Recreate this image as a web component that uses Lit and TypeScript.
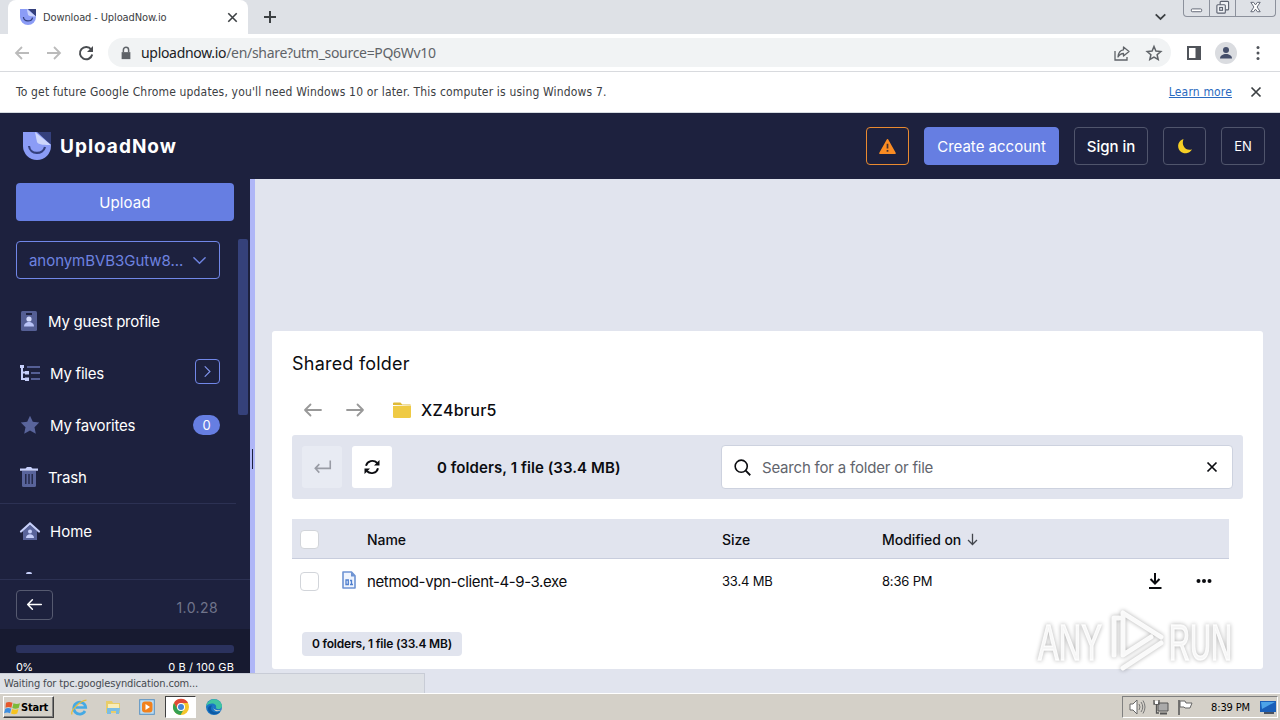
import { LitElement, html, svg, css, nothing } from 'lit';
import { customElement, property } from 'lit/decorators.js';
import { classMap } from 'lit/directives/class-map.js';
import { styleMap } from 'lit/directives/style-map.js';

const icons: Record<string, unknown> = {
  logo: svg`
    <path d="M0 0h28v14a14 14 0 0 1-28 0z" fill="#8b9cf6"/>
    <path d="M14 0h14v13z" fill="#34407c"/>
    <path d="M12 0l2 10c1 3 9 3 14 3z" fill="#cdd6fb"/>
    <path d="M6 14c1 9 14 9 16 1" fill="none" stroke="#34407c" stroke-width="2.2"/>`,
  back: svg`<path d="M15 8H2M8 2L2 8l6 6" fill="none" stroke="currentColor" stroke-width="1.8"/>`,
  forward: svg`<path d="M1 8h13M8 2l6 6-6 6" fill="none" stroke="currentColor" stroke-width="1.8"/>`,
  reload: svg`<path d="M13.2 4.5A6.2 6.2 0 1 0 14.2 9.5" fill="none" stroke="currentColor" stroke-width="2"/><path d="M15 1v6H9z" fill="currentColor"/>`,
  lock: svg`<path d="M3 7h10v8H3z" fill="currentColor"/><path d="M5 7V4.500a3 3 0 0 1 6 0V7" fill="none" stroke="currentColor" stroke-width="1.700"/>`,
  share: svg`<path d="M1 6v9h12v-3" fill="none" stroke="currentColor" stroke-width="1.300"/><path d="M9.500 2l5.500 4.500-5.500 4.500V8.500C7 8.500 5.500 9.500 4 12c.3-4 2-6.800 5.500-7.200z" fill="none" stroke="currentColor" stroke-width="1.300" stroke-linejoin="round"/>`,
  starLine: svg`<path d="M8 1.500l1.900 4.600 4.900.4-3.700 3.200 1.100 4.800L8 12l-4.200 2.500 1.100-4.800L1.200 6.500l4.900-.4z" fill="none" stroke="currentColor" stroke-width="1.500"/>`,
  panel: svg`<path d="M2 2h12v12H2z" fill="none" stroke="currentColor" stroke-width="2"/><path d="M9.500 2H15v12H9.500z" fill="currentColor"/>`,
  avatar: svg`<circle cx="11" cy="11" r="11" fill="#dadce0"/><circle cx="11" cy="8" r="3" fill="#454f6b"/><path d="M5 16.500c0-6 12-6 12 0z" fill="#454f6b"/>`,
  more: svg`<circle cx="8" cy="2.500" r="1.500" fill="currentColor"/><circle cx="8" cy="8" r="1.500" fill="currentColor"/><circle cx="8" cy="13.500" r="1.500" fill="currentColor"/>`,
  cross: svg`<path d="M3.500 3.500l9 9M12.500 3.500l-9 9" fill="none" stroke="currentColor" stroke-width="1.700"/>`,
  plus: svg`<path d="M8 2v12M2 8h12" stroke="currentColor" stroke-width="2"/>`,
  chevron: svg`<path d="M2 5l6 6 6-6" fill="none" stroke="currentColor" stroke-width="1.600" stroke-linecap="round"/>`,
  chevronBold: svg`<path d="M1 5l7 6.500L15 5" fill="none" stroke="currentColor" stroke-width="2.600"/>`,
  chevronRight: svg`<path d="M5 2l6 6-6 6" fill="none" stroke="currentColor" stroke-width="1.400" stroke-linecap="round"/>`,
  minimize: svg`<rect x="2.500" y="9.500" width="11" height="3" rx="1" fill="#fff" stroke="#5c6270"/>`,
  restore: svg`<g fill="#eef0f4" stroke="#5c6270" stroke-width="1.200"><rect x="5.500" y="1.500" width="9" height="9" rx="1"/><rect x="2" y="5" width="9" height="9" rx="1"/><rect x="5" y="8" width="3" height="3"/></g>`,
  close: svg`<path d="M3 2.500h3L8 5.200l2-2.700h3L9.700 7.500l3.300 5h-3L8 9.800l-2 2.700H3l3.300-5z" fill="#fff" stroke="#5c6270"/>`,
  warning: svg`<path d="M8 1.700L15 14.300H1z" fill="#fb8c23" stroke="#fb8c23" stroke-width="1.600" stroke-linejoin="round"/><path d="M8 5.500v4.300M8 11.300v1.700" stroke="#49302e" stroke-width="1.600"/>`,
  moon: svg`<path d="M6.500 1A7.300 7.300 0 1 0 15 11.200C9.500 13.500 3.800 8 6.500 1z" fill="#f6cf25"/>`,
  profile: svg`<rect x="2" width="16" height="20" rx="1.500" fill="#555f95"/><path d="M7 2h6v2H7z" fill="#1d213e"/><circle cx="10" cy="8" r="2.600" fill="#d3dafb"/><path d="M5 15.500c0-6 10-6 10 0z" fill="#b9c3f7"/>`,
  files: svg`<path d="M2 2v13h6M2 8.500h6" fill="none" stroke="#c7d0fb" stroke-width="2"/><path d="M0 1h4v3H0zM5 7h4v3.500H5zM5 13.500h4V17H5z" fill="#c7d0fb"/><path d="M7 3h13M11 9h9M11 15h9" stroke="#555f95" stroke-width="2"/>`,
  star: svg`<path d="M10 .8l2.800 6 6.400.8-4.700 4.600 1.300 6.600L10 15.600l-5.800 3.200 1.300-6.600L.8 7.600l6.400-.8z" fill="#59649b"/>`,
  trash: svg`<path d="M3 4h14v14.500a1.500 1.500 0 0 1-1.500 1.500h-11A1.500 1.500 0 0 1 3 18.500z" fill="#59649b"/><path d="M1 1.500h5.500L8 0h4l1.500 1.500H19v2.300H1z" fill="#c7d0fb"/><path d="M6.800 7v10M10 7v10M13.200 7v10" stroke="#1d213e" stroke-width="1.300"/>`,
  home: svg`<path d="M3 10l7-6 7 6v9H3z" fill="#59649b"/><path d="M1 10.500L10 2.500l9 8" fill="none" stroke="#c7d0fb" stroke-width="2.200" stroke-linecap="round"/><circle cx="10" cy="10.500" r="2" fill="#c7d0fb"/><path d="M6 17c0-5 8-5 8 0z" fill="#c7d0fb"/>`,
  arrowLeft: svg`<path d="M18 10H2M7.500 4.500L2 10l5.500 5.500" fill="none" stroke="currentColor" stroke-width="1.800" stroke-linecap="round" stroke-linejoin="round"/>`,
  arrowRight: svg`<path d="M2 10h16M12.500 4.500L18 10l-5.500 5.500" fill="none" stroke="currentColor" stroke-width="1.800" stroke-linecap="round" stroke-linejoin="round"/>`,
  arrowDown: svg`<path d="M8 1v13M2.500 8.700L8 14.200l5.500-5.500" fill="none" stroke="currentColor" stroke-width="1.600"/>`,
  folder: svg`<path d="M0 4V2.500A1 1 0 0 1 1 1.500h6.500l1.700 2H17a1 1 0 0 1 1 1z" fill="#dfba38"/><path d="M0 5h18v10.500a1.500 1.500 0 0 1-1.500 1.500h-15A1.500 1.500 0 0 1 0 15.500z" fill="#efca44"/>`,
  enter: svg`<path d="M15.300 1.500v7.300H1.500M5 4.800L1.200 8.800 5 12.800" fill="none" stroke="currentColor" stroke-width="1.500"/>`,
  sync: svg`<path d="M2 6.800C3.200 1.800 9.500.3 13.300 4M14 9.200C12.800 14.200 6.500 15.700 2.700 12" fill="none" stroke="currentColor" stroke-width="1.900"/><path d="M15.500 1v5.500H10zM.5 15V9.500H6z" fill="currentColor"/>`,
  search: svg`<circle cx="6.800" cy="6.800" r="5.700" fill="none" stroke="currentColor" stroke-width="1.500"/><path d="M10.800 10.800l4.500 4.500" stroke="currentColor" stroke-width="1.700"/>`,
  exe: svg`<path d="M1 1h8.500L13 4.700V17H1z" fill="#eff4fd" stroke="#6d93d3" stroke-width="1.600" stroke-linejoin="round"/><path d="M9 1v4.500h4z" fill="#6d93d3"/><path d="M4 9h2.300v4.500H4zM8 9.500h1.500v4M8 13.500h3" fill="none" stroke="#4f7fce" stroke-width="1.300"/>`,
  download: svg`<path d="M8 0v10.500M3.500 6L8 10.500 12.500 6" fill="none" stroke="currentColor" stroke-width="2"/><path d="M2 15h12.500" stroke="currentColor" stroke-width="2"/>`,
  dots: svg`<circle cx="2.500" cy="8" r="2" fill="currentColor"/><circle cx="8" cy="8" r="2" fill="currentColor"/><circle cx="13.500" cy="8" r="2" fill="currentColor"/>`,
  windows: svg`<path d="M1 3q3-2 7 0L6.800 8.200q-3-1.600-6.300 0z" fill="#e6582b"/><path d="M9 3.400q3.500 1.700 7 0L14.600 8.500q-3.500 1.500-6.800 0z" fill="#7cba38"/><path d="M.3 9.200q3-1.600 6.300 0L5.400 14q-3-1.600-6.400 0z" fill="#3d8ee0"/><path d="M7.600 9.500q3.200 1.700 6.800 0L13 14.500q-3.200 1.500-6.600 0z" fill="#f6c31f"/>`,
  ie: svg`<path d="M14 12a6 6 0 1 1 .7-3.500H4.500" fill="none" stroke="#45a9e4" stroke-width="2.700"/><path d="M1 15.500C-1 12 9 1.500 15.500 1.200" fill="none" stroke="#e7bd3a" stroke-width="1.300"/>`,
  explorer: svg`<path d="M1 2h6l1 2h7v10H1z" fill="#e9cd69"/><path d="M3 5h11v5H3z" fill="#f9edb8"/><path d="M2 9h13l-1 6h-3v-3H6v3H2z" fill="#7bbde4"/>`,
  media: svg`<rect x=".7" y=".7" width="14.600" height="14.600" fill="#bcdcf3" stroke="#5791c3"/><rect x="3" y="2.500" width="10.500" height="11" rx="3" fill="#f1811d"/><path d="M6.500 5l4.500 3-4.500 3z" fill="#fff"/>`,
  chrome: svg`<circle cx="8" cy="8" r="8" fill="#f5c62c"/><path d="M1 4a8 8 0 0 1 14 0H8L4.500 10z" fill="#e04a38"/><path d="M1 4a8 8 0 0 0 6.500 12l3.500-6H4.500z" fill="#35a052"/><circle cx="8" cy="8" r="4" fill="#fff"/><circle cx="8" cy="8" r="3" fill="#4285d8"/>`,
  edge: svg`<circle cx="8" cy="8" r="8" fill="#1976c5"/><path d="M.2 7C2-2 14-2 16 6.500c.4 4-5 4.500-6 2.500 1.500-5-6-6-9.800-2z" fill="#40c5a1"/><path d="M6 6.500c-3 4 1 8.500 8 6.200C11 17 2 16 2 9.500 2 7.500 4 6 6 6.500z" fill="#0c59a4"/><path d="M7.500 7c-1 3 2 5 7.500 3.800-3 3-8.500 1.200-7.500-3.800z" fill="#d4d0c8"/>`,
  volume: svg`<path d="M1 5h3l4-4v14l-4-4H1z" fill="#fff" stroke="#666"/><path d="M10 5q2 3 0 6M12 3q3.500 5 0 10M14 1.500q4 6.500 0 13" fill="none" stroke="#777"/>`,
  network: svg`<path d="M5 4h10v8H5z" fill="#aaa" stroke="#555"/><path d="M7 14.500h7" stroke="#555" stroke-width="2"/><path d="M1 1v4h5V1M3.500 5v9H6" fill="none" stroke="#555" stroke-width="1.300"/><path d="M2 2h3v3H2z" fill="#fff"/>`,
  flag: svg`<path d="M2 1v15" stroke="#555" stroke-width="1.500"/><path d="M3 2h5l1 2h6l-2 5H8L7 8H3z" fill="#fff" stroke="#666"/>`,
  desktop: svg`<path d="M0 2h16v11H0z" fill="#1b5fb8"/><path d="M1 3h14L2 10z" fill="#4da3e8"/><path d="M4 14h10" stroke="#4a5260" stroke-width="2"/>`,
};

const viewBoxes: Record<string, string> = {
  logo: '0 0 28 28',
  avatar: '0 0 22 22',
  profile: '0 0 20 20',
  files: '0 0 20 18',
  star: '0 0 20 20',
  trash: '0 0 20 20',
  home: '0 0 20 20',
  arrowLeft: '0 0 20 20',
  arrowRight: '0 0 20 20',
  folder: '0 0 18 18',
  exe: '0 0 14 18',
};

@customElement('un-icon')
export class UnIcon extends LitElement {
  static styles = css`
    :host {
      display: inline-flex;
      flex: none;
    }
    svg {
      display: block;
      overflow: visible;
    }
  `;

  @property() name = '';
  @property({ type: Number }) size = 16;

  render() {
    return html`<svg
      width=${this.size}
      height=${this.size}
      viewBox=${viewBoxes[this.name] ?? '0 0 16 16'}
    >${icons[this.name]}</svg>`;
  }
}

@customElement('browser-chrome')
export class BrowserChrome extends LitElement {
  static styles = css`
    :host {
      display: block;
      font-family: 'DejaVu Sans Condensed', 'DejaVu Sans', sans-serif;
      font-stretch: condensed;
      color: #3c4043;
    }
    .tabs {
      display: flex;
      height: 34px;
      background: #dee1e6;
    }
    .tab {
      display: flex;
      align-items: center;
      box-sizing: border-box;
      width: 240px;
      margin-left: 8px;
      padding: 0 8px 0 12px;
      border-radius: 8px 8px 0 0;
      background: #fff;
      font-size: 11px;
    }
    .tab-title {
      flex: 1;
      margin-left: 7px;
      letter-spacing: -0.12px;
    }
    .new-tab {
      padding: 9px 14px;
    }
    .down {
      margin-left: auto;
      padding: 11px 17px 0 0;
    }
    .window {
      display: flex;
      box-sizing: border-box;
      width: 93px;
      height: 17px;
      border: 1px solid #8c919c;
      border-top: 0;
      border-radius: 0 0 4px 4px;
      margin-right: 4px;
    }
    .window span {
      display: flex;
      justify-content: center;
      width: 25px;
    }
    .window span + span {
      border-left: 1px solid #8c919c;
    }
    .window span:last-child {
      flex: 1;
    }
    .bar {
      display: flex;
      align-items: center;
      box-sizing: border-box;
      height: 38px;
      padding: 0 14px;
      border-bottom: 1px solid #d8dade;
      background: #fff;
    }
    .nav {
      display: flex;
      gap: 16px;
      color: #bbb;
    }
    .nav .reload {
      color: #4a4d51;
    }
    .address {
      display: flex;
      align-items: center;
      box-sizing: border-box;
      width: 1063px;
      height: 29px;
      margin-left: 14px;
      padding: 0 9px 0 11px;
      border-radius: 15px;
      background: #f1f3f4;
      color: #5f6368;
    }
    .url {
      flex: 1;
      margin-left: 8px;
      font-family: 'Noto Sans', sans-serif;
      font-size: 14px;
      letter-spacing: -0.31px;
    }
    .url b {
      font-weight: 400;
      color: #202124;
    }
    .address-tools {
      display: flex;
      gap: 16px;
    }
    .tools {
      display: flex;
      flex: 1;
      align-items: center;
      justify-content: space-between;
      padding-left: 15px;
      color: #50545a;
    }
    .info {
      display: flex;
      align-items: center;
      box-sizing: border-box;
      height: 41px;
      padding: 0 16px;
      border-bottom: 1px solid #d5dbe0;
      background: #fff;
      font-size: 12px;
      letter-spacing: 0.165px;
    }
    .info-text {
      flex: 1;
    }
    .learn {
      margin-right: 16px;
      color: #2a6ac0;
      text-decoration: underline;
    }
  `;

  render() {
    return html`
      <div class="tabs">
        <div class="tab">
          <un-icon name="logo" size="16"></un-icon>
          <span class="tab-title">Download - UploadNow.io</span>
          <un-icon name="cross" size="15"></un-icon>
        </div>
        <un-icon class="new-tab" name="plus" size="16"></un-icon>
        <un-icon class="down" name="chevronBold" size="11"></un-icon>
        <div class="window">
          <span><un-icon name="minimize" size="15"></un-icon></span>
          <span><un-icon name="restore" size="15"></un-icon></span>
          <span><un-icon name="close" size="15"></un-icon></span>
        </div>
      </div>
      <div class="bar">
        <div class="nav">
          <un-icon name="back"></un-icon>
          <un-icon name="forward"></un-icon>
          <un-icon class="reload" name="reload"></un-icon>
        </div>
        <div class="address">
          <un-icon name="lock" size="14"></un-icon>
          <span class="url"><b>uploadnow.io</b>/en/share?utm_source=PQ6Wv10</span>
          <div class="address-tools">
            <un-icon name="share"></un-icon>
            <un-icon name="starLine"></un-icon>
          </div>
        </div>
        <div class="tools">
          <un-icon name="panel"></un-icon>
          <un-icon name="avatar" size="22"></un-icon>
          <un-icon name="more"></un-icon>
        </div>
      </div>
      <div class="info">
        <span class="info-text">To get future Google Chrome updates, you'll need Windows 10 or later. This computer is using Windows 7.</span>
        <span class="learn">Learn more</span>
        <un-icon name="cross"></un-icon>
      </div>
    `;
  }
}

const navItems = [
  { icon: 'profile', label: 'My guest profile', narrow: true },
  { icon: 'files', label: 'My files', expand: true },
  { icon: 'star', label: 'My favorites', count: 0 },
  { icon: 'trash', label: 'Trash', narrow: true },
];

@customElement('side-bar')
export class SideBar extends LitElement {
  static styles = css`
    :host {
      display: flex;
      flex-direction: column;
      flex: none;
      box-sizing: border-box;
      position: relative;
      width: 255px;
      border-right: 5px solid #afb6f7;
      background: #1d213e;
      color: #fff;
    }
    .upload {
      display: flex;
      flex: none;
      align-items: center;
      justify-content: center;
      height: 38px;
      margin: 4px 16px 18px;
      border-radius: 4px;
      background: #667ee2;
      letter-spacing: 0.1px;
    }
    .scroll {
      display: flex;
      height: 340px;
    }
    .list {
      flex: none;
      width: 238px;
      overflow: hidden;
    }
    .account {
      display: flex;
      align-items: center;
      justify-content: space-between;
      box-sizing: border-box;
      width: 204px;
      height: 38px;
      margin: 2px 0 16px 16px;
      padding: 0 12px;
      border: 1px solid #7187e8;
      border-radius: 4px;
      color: #6e83e0;
      letter-spacing: -0.05px;
    }
    .item {
      display: flex;
      align-items: center;
      box-sizing: border-box;
      height: 52px;
      padding: 0 18px 0 20px;
    }
    .item.narrow un-icon {
      margin: 0 -1px;
    }
    .label {
      flex: 1;
      margin-left: 10px;
      letter-spacing: -0.22px;
    }
    .narrow .label {
      margin-left: 10px;
    }
    .expand {
      display: flex;
      align-items: center;
      justify-content: center;
      box-sizing: border-box;
      width: 25px;
      height: 25px;
      margin-bottom: 4px;
      border: 1px solid #7187e8;
      border-radius: 4px;
      color: #8296ef;
    }
    .count {
      width: 27px;
      border-radius: 10px;
      background: #667ee2;
      font-size: 13px;
      line-height: 20px;
      text-align: center;
    }
    .home {
      width: 236px;
      height: 54px;
      padding-top: 1px;
      border-top: 1px solid #2c3153;
    }
    .home .label {
      letter-spacing: 0;
    }
    .peek {
      width: 6px;
      height: 2px;
      margin: 15px 0 0 26px;
      border-radius: 3px 3px 0 0;
      background: #c7d0fb;
    }
    .thumb {
      width: 10px;
      height: 176px;
      border-radius: 2px;
      background: #35417a;
    }
    .foot {
      display: flex;
      align-items: center;
      justify-content: space-between;
      box-sizing: border-box;
      height: 50px;
      padding: 0 32px 0 16px;
      border-top: 1px solid #2c3153;
      color: #70748b;
      letter-spacing: 0.4px;
    }
    .version {
      margin-top: 6px;
      font-size: 14px;
    }
    .collapse {
      display: flex;
      align-items: center;
      justify-content: center;
      box-sizing: border-box;
      width: 37px;
      height: 30px;
      border: 1px solid #565a70;
      border-radius: 4px;
      color: #fff;
    }
    .storage {
      flex: 1;
      padding: 16px 16px 0;
      background: #171a30;
      font-size: 11px;
    }
    .meter {
      height: 8px;
      border-radius: 3px;
      background: #2b325e;
    }
    .meter div {
      height: 100%;
      background: #667ee2;
    }
    .amount {
      display: flex;
      justify-content: space-between;
      margin-top: 7px;
      line-height: 14px;
    }
    .total {
      letter-spacing: 0.13px;
    }
    .used {
      letter-spacing: -0.6px;
    }
    .grip {
      position: absolute;
      right: -3px;
      top: 270px;
      width: 1px;
      height: 20px;
      background: #1d213e;
    }
  `;

  used = 0;

  renderItem(item: any) {
    return html`
      <div class=${classMap({ item: true, narrow: Boolean(item.narrow) })}>
        <un-icon name=${item.icon} size="20"></un-icon>
        <span class="label">${item.label}</span>
        ${item.expand ? html`<span class="expand"><un-icon name="chevronRight" size="13"></un-icon></span>` : nothing}
        ${item.count !== undefined ? html`<span class="count">${item.count}</span>` : nothing}
      </div>
    `;
  }

  render() {
    return html`
      <div class="upload">Upload</div>
      <div class="scroll">
        <div class="list">
          <div class="account">
            <span>anonymBVB3Gutw8...</span>
            <un-icon name="chevron" size="15"></un-icon>
          </div>
          ${navItems.map((item) => this.renderItem(item))}
          <div class="item home">
            <un-icon name="home" size="20"></un-icon>
            <span class="label">Home</span>
          </div>
          <div class="peek"></div>
        </div>
        <div class="thumb"></div>
      </div>
      <div class="foot">
        <span class="collapse"><un-icon name="arrowLeft" size="17"></un-icon></span>
        <span class="version">1.0.28</span>
      </div>
      <div class="storage">
        <div class="meter"><div style=${styleMap({ width: `${this.used}%` })}></div></div>
        <div class="amount"><span class="used">${this.used}%</span><span class="total">0 B / 100 GB</span></div>
      </div>
      <div class="grip"></div>
    `;
  }
}

@customElement('shared-folder')
export class SharedFolder extends LitElement {
  static styles = css`
    :host {
      display: block;
      box-sizing: border-box;
      width: 991px;
      height: 338px;
      margin: 152px 0 0 17px;
      padding: 20px;
      border-radius: 3px;
      background: #fff;
      color: #0b0c10;
    }
    .title {
      height: 26px;
      font-size: 18px;
      line-height: 26px;
      letter-spacing: 0.22px;
    }
    .path {
      display: flex;
      align-items: center;
      height: 20px;
      margin: 23px 0 15px;
      padding-left: 11px;
      color: #999;
    }
    .path .next {
      margin-left: 22px;
    }
    .path .folder {
      margin-left: 28px;
    }
    .name {
      margin-left: 10px;
      color: #0b0c10;
      font-size: 16px;
      font-weight: 500;
      letter-spacing: 0.25px;
    }
    .toolbar {
      display: flex;
      align-items: center;
      box-sizing: border-box;
      width: 951px;
      height: 64px;
      padding: 0 10px;
      border-radius: 3px;
      background: #e1e4ee;
    }
    .button {
      display: flex;
      align-items: center;
      justify-content: center;
      width: 40px;
      height: 42px;
      margin-right: 10px;
      border-radius: 3px;
      background: #fff;
    }
    .button.disabled {
      background: #e8ebf3;
      color: #999ca5;
    }
    .summary {
      flex: 1;
      margin-left: 35px;
      font-size: 15px;
      font-weight: 600;
      letter-spacing: 0.07px;
    }
    .search {
      display: flex;
      align-items: center;
      box-sizing: border-box;
      width: 512px;
      height: 44px;
      padding: 0 12px;
      border: 1px solid #cdd2df;
      border-radius: 4px;
      background: #fff;
    }
    .placeholder {
      flex: 1;
      margin-left: 11px;
      color: #62656d;
      font-size: 15px;
      letter-spacing: -0.2px;
    }
    .table {
      width: 937px;
      margin-top: 20px;
    }
    .row {
      display: grid;
      grid-template-columns: 49px 26px 355px 160px 1fr auto;
      align-items: center;
      box-sizing: border-box;
      height: 44px;
      padding: 0 17px 0 0;
      font-size: 13px;
      letter-spacing: -0.18px;
    }
    .head {
      height: 40px;
      padding-top: 1px;
      border-bottom: 1px solid #c8cddd;
      background: #e1e4ee;
      font-size: 14px;
      font-weight: 500;
      letter-spacing: -0.05px;
    }
    .check {
      box-sizing: border-box;
      width: 19px;
      height: 19px;
      margin-left: 8px;
      border: 1px solid #d2d5da;
      border-radius: 4px;
      background: #fff;
    }
    .modified {
      display: flex;
      align-items: center;
      gap: 5px;
    }
    .modified un-icon {
      color: #42454c;
    }
    .type {
      margin: -2px 0 0 -1px;
    }
    .file {
      font-size: 15px;
      letter-spacing: -0.37px;
    }
    .actions {
      display: flex;
      gap: 33px;
    }
    .badge {
      display: inline-block;
      box-sizing: border-box;
      width: 160px;
      height: 24px;
      margin: 29px 0 0 10px;
      padding-left: 10px;
      border-radius: 4px;
      background: #e1e4ee;
      font-size: 12px;
      font-weight: 600;
      line-height: 24px;
      letter-spacing: -0.2px;
      white-space: nowrap;
    }
  `;

  summary = '0 folders, 1 file (33.4 MB)';

  render() {
    return html`
      <div class="title">Shared folder</div>
      <div class="path">
        <un-icon name="arrowLeft" size="20"></un-icon>
        <un-icon class="next" name="arrowRight" size="20"></un-icon>
        <un-icon class="folder" name="folder" size="18"></un-icon>
        <span class="name">XZ4brur5</span>
      </div>
      <div class="toolbar">
        <span class="button disabled"><un-icon name="enter" size="17"></un-icon></span>
        <span class="button"><un-icon name="sync" size="16"></un-icon></span>
        <span class="summary">${this.summary}</span>
        <div class="search">
          <un-icon name="search" size="17"></un-icon>
          <span class="placeholder">Search for a folder or file</span>
          <un-icon name="cross" size="16"></un-icon>
        </div>
      </div>
      <div class="table">
        <div class="row head">
          <span class="check"></span><span></span>
          <span>Name</span>
          <span>Size</span>
          <span class="modified">Modified on <un-icon name="arrowDown" size="13"></un-icon></span>
        </div>
        <div class="row">
          <span class="check"></span>
          <un-icon class="type" name="exe" size="18"></un-icon>
          <span class="file">netmod-vpn-client-4-9-3.exe</span>
          <span>33.4 MB</span>
          <span>8:36 PM</span>
          <span class="actions">
            <un-icon name="download" size="16"></un-icon>
            <un-icon name="dots" size="16"></un-icon>
          </span>
        </div>
      </div>
      <span class="badge">${this.summary}</span>
    `;
  }
}

@customElement('task-bar')
export class TaskBar extends LitElement {
  static styles = css`
    :host {
      display: flex;
      align-items: center;
      box-sizing: border-box;
      height: 27px;
      padding: 0 2px 0 3px;
      border-top: 1px solid #fff;
      background: #d4d0c8;
      color: #000;
      font-family: 'DejaVu Sans Condensed', 'DejaVu Sans', sans-serif;
      font-stretch: condensed;
      font-size: 11px;
    }
    .start {
      display: flex;
      align-items: center;
      box-sizing: border-box;
      width: 51px;
      height: 22px;
      padding-left: 1px;
      border: 1px solid;
      border-color: #fff #404040 #404040 #fff;
      box-shadow: inset -1px -1px #808080;
      font-weight: 700;
      letter-spacing: -0.2px;
    }
    .start un-icon {
      margin-right: 1px;
    }
    .apps {
      display: flex;
      align-items: center;
      margin-left: 8px;
    }
    .app {
      display: flex;
      align-items: center;
      justify-content: center;
      box-sizing: border-box;
      width: 34px;
      height: 22px;
    }
    .active {
      width: 31px;
      margin: 0 1px 0 1px;
      border: 1px solid;
      border-color: #404040 #fff #fff #404040;
      background: #fff;
    }
    .tray {
      display: flex;
      align-items: center;
      box-sizing: border-box;
      width: 156px;
      height: 22px;
      margin-left: auto;
      padding: 0 1px 0 6px;
      border: 1px solid;
      border-color: #808080 #fff #fff #808080;
    }
    .tray un-icon {
      margin-right: 8px;
    }
    .clock {
      flex: 1;
      text-align: center;
      white-space: nowrap;
      letter-spacing: -0.15px;
    }
    .tray un-icon:last-child {
      margin-right: 0;
    }
  `;

  render() {
    return html`
      <div class="start"><un-icon name="windows" size="15"></un-icon>Start</div>
      <div class="apps">
        ${['ie', 'explorer', 'media', 'chrome', 'edge'].map((name) => html`
          <span class=${classMap({ app: true, active: name === 'chrome' })}>
            <un-icon name=${name} size="16"></un-icon>
          </span>
        `)}
      </div>
      <div class="tray">
        <un-icon name="volume" size="16"></un-icon>
        <un-icon name="network" size="16"></un-icon>
        <un-icon name="flag" size="16"></un-icon>
        <span class="clock">8:39 PM</span>
        <un-icon name="desktop" size="16"></un-icon>
      </div>
    `;
  }
}

@customElement('app-root')
export class AppRoot extends LitElement {
  static styles = css`
    :host {
      display: flex;
      flex-direction: column;
      position: relative;
      width: 1280px;
      height: 720px;
      overflow: hidden;
      font-family: Inter, 'Open Sans', sans-serif;
      font-size: 15px;
    }
    header {
      display: flex;
      flex: none;
      align-items: center;
      box-sizing: border-box;
      height: 66px;
      padding: 0 15px 0 23px;
      background: #1d213e;
      color: #fff;
    }
    .brand {
      flex: 1;
      margin-left: 9px;
      font-size: 19px;
      font-weight: 700;
      letter-spacing: 1px;
    }
    .actions {
      display: flex;
      gap: 15px;
    }
    .action {
      display: flex;
      align-items: center;
      justify-content: center;
      box-sizing: border-box;
      width: 44px;
      height: 38px;
      border: 1px solid #50556c;
      border-radius: 4px;
    }
    .alert {
      width: 43px;
      border-color: #e98a30;
    }
    .create {
      width: 135px;
      border-color: #667ee2;
      background: #667ee2;
    }
    .sign {
      width: 74px;
      font-weight: 500;
    }
    .lang {
      font-size: 13px;
    }
    .theme {
      width: 43px;
    }
    .body {
      display: flex;
      flex: 1;
      min-height: 0;
    }
    main {
      flex: 1;
      background: #e1e4ee;
    }
    .status {
      position: absolute;
      left: 0;
      bottom: 27px;
      box-sizing: border-box;
      width: 425px;
      height: 20px;
      padding-left: 4px;
      border: solid #c8ccd6;
      border-width: 1px 1px 0 0;
      background: #dee1e6;
      color: #464a50;
      font-family: 'DejaVu Sans Condensed', 'DejaVu Sans', sans-serif;
      font-stretch: condensed;
      font-size: 11px;
      line-height: 19px;
      letter-spacing: -0.14px;
    }
    .watermark {
      position: absolute;
      left: 1030px;
      top: 604px;
      overflow: visible;
      filter: drop-shadow(0 0 2px rgba(0, 0, 0, 0.35));
    }
    .watermark text {
      font: 50px 'Liberation Sans', sans-serif;
      fill: #fff;
      fill-opacity: 0.85;
      stroke: #fff;
      stroke-width: 1.5px;
      stroke-opacity: 0.85;
    }
  `;

  render() {
    return html`
      <browser-chrome></browser-chrome>
      <header>
        <un-icon name="logo" size="28"></un-icon>
        <span class="brand">UploadNow</span>
        <div class="actions">
          <span class="action alert"><un-icon name="warning" size="17"></un-icon></span>
          <span class="action create">Create account</span>
          <span class="action sign">Sign in</span>
          <span class="action theme"><un-icon name="moon" size="16"></un-icon></span>
          <span class="action lang">EN</span>
        </div>
      </header>
      <div class="body">
        <side-bar></side-bar>
        <main><shared-folder></shared-folder></main>
      </div>
      <task-bar></task-bar>
      <div class="status">Waiting for tpc.googlesyndication.com...</div>
      <svg class="watermark" width="210" height="72" viewBox="0 0 210 72">
        <text x="8" y="56" textLength="64" lengthAdjust="spacingAndGlyphs">ANY</text>
        <text x="139" y="56" textLength="63" lengthAdjust="spacingAndGlyphs">RUN</text>
        <path d="M84 51V14h5M93 9l38 24M93 9v42l28-18M93 64l38-25" fill="none" stroke="#fff" stroke-width="5" stroke-linejoin="round" stroke-linecap="round" stroke-opacity=".9"/>
      </svg>
    `;
  }
}
